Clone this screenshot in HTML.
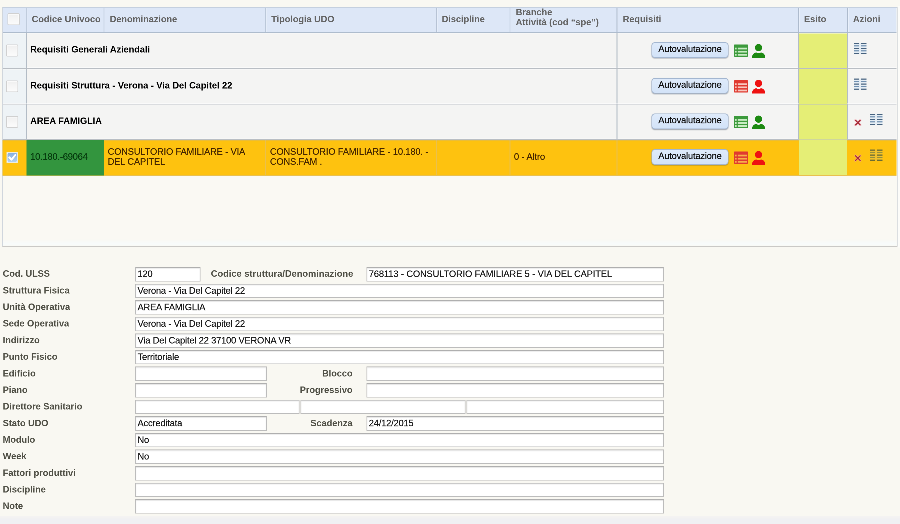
<!DOCTYPE html>
<html><head><meta charset="utf-8"><title>Requisiti UDO</title>
<style>
html,body{margin:0;padding:0;}
body{width:900px;height:524px;background:#f9f8f2;overflow:hidden;position:relative;}
#page{position:absolute;left:0;top:0;width:3600px;height:2096px;transform-origin:0 0;transform:scale(0.25);will-change:transform;font-family:"Liberation Sans",sans-serif;font-size:36.48px;color:#000;}
#page div,#page span{position:absolute;box-sizing:border-box;white-space:nowrap;}
#grid{background:#faf9f3;border:3.32px solid #d0d6dd;border-right-color:#bcc4ce;border-bottom-color:#9a9a9a;border-top-color:#c5d0df;}
.hd{background:#dde7f7;border-bottom:3.32px solid #aebccd;}
.hc{color:#646464;font-weight:bold;line-height:43.11px;}
.hs{width:6.63px;background:#aebbcd;border-right:3.32px solid #e9f0fb;}
.rw{background:#f4f4f3;border-top:3.32px solid #fbfbfb;border-bottom:3.32px solid #b9bec4;box-shadow:inset 0 -2.98px 0 #fafafa;}
.vs{background:#b3bcc6;}
.c0{background:#eef3f6;}
.cb{border:3.32px solid #d0d0d0;background:linear-gradient(#f0f0f0,#fcfcfc);border-radius:4.97px;box-shadow:inset 0 0 0 3.32px #fafafa;}
.tt{font-weight:bold;line-height:43.11px;}
.bt{border:3.32px solid #a3b6d0;border-radius:13.26px;background:linear-gradient(#dfebfb,#d3e3f8);box-shadow:0 2.65px 3.98px rgba(60,70,90,.45);text-align:center;line-height:48.41px;color:#111;letter-spacing:-0.4px;}
.es{background:#e5ee76;}
.sel{background:#fec20f;border-top:3.32px solid #e9bd3a;border-bottom:3.32px solid #e8c050;box-shadow:none;}
.nt,.st,.in,.bt{-webkit-text-stroke:0.6px currentColor;}
.st{color:#452600;line-height:39.79px;letter-spacing:-0.23px;}
.lb{color:#505046;font-weight:bold;line-height:43.11px;}
.lr{text-align:right;}
.in{background:#fff;border:3.32px solid #bcbcbc;border-top-color:#afafaf;box-shadow:inset 0 3.32px 3.32px #e4e4e4;line-height:49.74px;padding-left:6.3px;color:#1a1a1a;letter-spacing:-0.36px;}
#foot{background:linear-gradient(#f6f5f2,#f0f0f3 40%);}
svg{position:absolute;overflow:visible;}
</style></head><body>
<div id="page">
<div id="grid" style="left:9px;top:28px;width:3581px;height:958px;"></div>
<div style="left:3592px;top:24px;width:8px;height:966px;background:#fcfcf9"></div>
<div style="left:12px;top:958px;width:3574px;height:24px;background:linear-gradient(rgba(248,251,250,0),#f8fbfa 60%)"></div>
<div class="hd" style="left:12px;top:31px;width:3574px;height:100px;"></div>
<div class="hs" style="left:103px;top:31px;height:97px;opacity:0.6"></div>
<div class="hs" style="left:414px;top:31px;height:97px;opacity:0.35"></div>
<div class="hs" style="left:1060px;top:31px;height:97px;opacity:0.7"></div>
<div class="hs" style="left:1744px;top:31px;height:97px;opacity:0.8"></div>
<div class="hs" style="left:2038px;top:31px;height:97px;opacity:0.3"></div>
<div class="hs" style="left:2466px;top:31px;height:97px;opacity:1"></div>
<div class="hs" style="left:3192px;top:31px;height:97px;opacity:1"></div>
<div class="hs" style="left:3388px;top:31px;height:97px;opacity:1"></div>
<div class="cb" style="left:30px;top:53px;width:49px;height:48px;"></div>
<div class="hc" style="left:127px;top:55px;">Codice Univoco</div>
<div class="hc" style="left:439px;top:55px;">Denominazione</div>
<div class="hc" style="left:1085px;top:55px;">Tipologia UDO</div>
<div class="hc" style="left:1767px;top:55px;">Discipline</div>
<div class="hc" style="left:2491px;top:55px;">Requisiti</div>
<div class="hc" style="left:3216px;top:55px;">Esito</div>
<div class="hc" style="left:3412px;top:55px;">Azioni</div>
<div class="hc" style="left:2063px;top:29px;line-height:39.79px">Branche<br>Attività (cod “spe”)</div>
<div class="rw" style="left:12px;top:131px;width:3574px;height:144px;"></div>
<div class="c0" style="left:12px;top:134px;width:93px;height:138px;"></div>
<div class="vs" style="left:103px;top:131px;width:4px;height:141px;"></div>
<div class="vs" style="left:2466px;top:131px;width:4px;height:141px;"></div>
<div class="vs" style="left:3192px;top:131px;width:4px;height:141px;"></div>
<div class="vs" style="left:3388px;top:131px;width:4px;height:141px;"></div>
<div class="cb" style="left:24px;top:178px;width:49px;height:48px;"></div>
<div class="tt" style="left:121px;top:176px;">Requisiti Generali Aziendali</div>
<div class="bt" style="left:2606px;top:169px;width:308px;height:62px;">Autovalutazione</div>
<svg style="left:2936px;top:178px" width="56" height="49" viewBox="0 0 14 12.2"><rect x="0" y="0" width="14" height="12.2" rx="0.7" fill="#3c9a3c"/><rect x="0.9" y="3.1" width="1.7" height="1.8" fill="#c9ecc4"/><rect x="3.7" y="3.1" width="9.5" height="1.8" fill="#c9ecc4"/><rect x="0.9" y="6.2" width="1.7" height="1.8" fill="#c9ecc4"/><rect x="3.7" y="6.2" width="9.5" height="1.8" fill="#c9ecc4"/><rect x="0.9" y="9.3" width="1.7" height="1.8" fill="#c9ecc4"/><rect x="3.7" y="9.3" width="9.5" height="1.8" fill="#c9ecc4"/></svg>
<svg style="left:3008px;top:175px" width="53" height="56" viewBox="0 0 13.2 14"><circle cx="6.5" cy="3.9" r="3.6" fill="#1d8a12"/><path d="M0 14 C0 10.6 2 9 4.3 8.7 C5.6 9.8 7.5 9.8 8.8 8.7 C11.2 9 13.2 10.6 13.2 14 Z" fill="#1d8a12"/></svg>
<div class="es" style="left:3196px;top:134px;width:192px;height:139px;"></div>
<svg style="left:3415px;top:171px" width="51" height="45" viewBox="0 0 12.8 11.2"><rect x="0" y="0" width="12.8" height="11.2" fill="#dbe8f5" opacity=".6"/><rect x="0" y="0" width="5.4" height="1.1" fill="#46627f"/><rect x="7.4" y="0" width="5.4" height="1.1" fill="#46627f"/><rect x="0" y="2.55" width="5.4" height="1.1" fill="#7090b0"/><rect x="7.4" y="2.55" width="5.4" height="1.1" fill="#7090b0"/><rect x="0" y="5.0" width="5.4" height="1.1" fill="#46627f"/><rect x="7.4" y="5.0" width="5.4" height="1.1" fill="#46627f"/><rect x="0" y="7.55" width="5.4" height="1.1" fill="#7090b0"/><rect x="7.4" y="7.55" width="5.4" height="1.1" fill="#7090b0"/><rect x="0" y="10.1" width="5.4" height="1.1" fill="#46627f"/><rect x="7.4" y="10.1" width="5.4" height="1.1" fill="#46627f"/></svg>
<div class="rw" style="left:12px;top:275px;width:3574px;height:143px;"></div>
<div class="c0" style="left:12px;top:278px;width:93px;height:136px;"></div>
<div class="vs" style="left:103px;top:275px;width:4px;height:139px;"></div>
<div class="vs" style="left:2466px;top:275px;width:4px;height:139px;"></div>
<div class="vs" style="left:3192px;top:275px;width:4px;height:139px;"></div>
<div class="vs" style="left:3388px;top:275px;width:4px;height:139px;"></div>
<div class="cb" style="left:24px;top:322px;width:49px;height:47px;"></div>
<div class="tt" style="left:121px;top:320px;">Requisiti Struttura - Verona - Via Del Capitel 22</div>
<div class="bt" style="left:2606px;top:312px;width:308px;height:62px;">Autovalutazione</div>
<svg style="left:2936px;top:321px" width="56" height="49" viewBox="0 0 14 12.2"><rect x="0" y="0" width="14" height="12.2" rx="0.7" fill="#e03a30"/><rect x="0.9" y="3.1" width="1.7" height="1.8" fill="#f8c9c0"/><rect x="3.7" y="3.1" width="9.5" height="1.8" fill="#f8c9c0"/><rect x="0.9" y="6.2" width="1.7" height="1.8" fill="#f8c9c0"/><rect x="3.7" y="6.2" width="9.5" height="1.8" fill="#f8c9c0"/><rect x="0.9" y="9.3" width="1.7" height="1.8" fill="#f8c9c0"/><rect x="3.7" y="9.3" width="9.5" height="1.8" fill="#f8c9c0"/></svg>
<svg style="left:3008px;top:318px" width="53" height="56" viewBox="0 0 13.2 14"><circle cx="6.5" cy="3.9" r="3.6" fill="#ee1111"/><path d="M0 14 C0 10.6 2 9 4.3 8.7 C5.6 9.8 7.5 9.8 8.8 8.7 C11.2 9 13.2 10.6 13.2 14 Z" fill="#ee1111"/></svg>
<div class="es" style="left:3196px;top:275px;width:192px;height:141px;"></div>
<svg style="left:3415px;top:314px" width="51" height="45" viewBox="0 0 12.8 11.2"><rect x="0" y="0" width="12.8" height="11.2" fill="#dbe8f5" opacity=".6"/><rect x="0" y="0" width="5.4" height="1.1" fill="#46627f"/><rect x="7.4" y="0" width="5.4" height="1.1" fill="#46627f"/><rect x="0" y="2.55" width="5.4" height="1.1" fill="#7090b0"/><rect x="7.4" y="2.55" width="5.4" height="1.1" fill="#7090b0"/><rect x="0" y="5.0" width="5.4" height="1.1" fill="#46627f"/><rect x="7.4" y="5.0" width="5.4" height="1.1" fill="#46627f"/><rect x="0" y="7.55" width="5.4" height="1.1" fill="#7090b0"/><rect x="7.4" y="7.55" width="5.4" height="1.1" fill="#7090b0"/><rect x="0" y="10.1" width="5.4" height="1.1" fill="#46627f"/><rect x="7.4" y="10.1" width="5.4" height="1.1" fill="#46627f"/></svg>
<div class="rw" style="left:12px;top:418px;width:3574px;height:142px;"></div>
<div class="c0" style="left:12px;top:421px;width:93px;height:135px;"></div>
<div class="vs" style="left:103px;top:418px;width:4px;height:138px;"></div>
<div class="vs" style="left:2466px;top:418px;width:4px;height:138px;"></div>
<div class="vs" style="left:3192px;top:418px;width:4px;height:138px;"></div>
<div class="vs" style="left:3388px;top:418px;width:4px;height:138px;"></div>
<div class="cb" style="left:24px;top:464px;width:49px;height:47px;"></div>
<div class="tt" style="left:121px;top:462px;">AREA FAMIGLIA</div>
<div class="bt" style="left:2606px;top:454px;width:308px;height:63px;">Autovalutazione</div>
<svg style="left:2936px;top:463px" width="56" height="49" viewBox="0 0 14 12.2"><rect x="0" y="0" width="14" height="12.2" rx="0.7" fill="#3c9a3c"/><rect x="0.9" y="3.1" width="1.7" height="1.8" fill="#c9ecc4"/><rect x="3.7" y="3.1" width="9.5" height="1.8" fill="#c9ecc4"/><rect x="0.9" y="6.2" width="1.7" height="1.8" fill="#c9ecc4"/><rect x="3.7" y="6.2" width="9.5" height="1.8" fill="#c9ecc4"/><rect x="0.9" y="9.3" width="1.7" height="1.8" fill="#c9ecc4"/><rect x="3.7" y="9.3" width="9.5" height="1.8" fill="#c9ecc4"/></svg>
<svg style="left:3008px;top:461px" width="53" height="56" viewBox="0 0 13.2 14"><circle cx="6.5" cy="3.9" r="3.6" fill="#1d8a12"/><path d="M0 14 C0 10.6 2 9 4.3 8.7 C5.6 9.8 7.5 9.8 8.8 8.7 C11.2 9 13.2 10.6 13.2 14 Z" fill="#1d8a12"/></svg>
<div class="es" style="left:3196px;top:418px;width:192px;height:140px;"></div>
<svg style="left:3418px;top:477px" width="27" height="27" viewBox="0 0 7 7"><path d="M1 1 L6 6 M6 1 L1 6" stroke="#f0a0aa" stroke-opacity=".55" stroke-width="2.5" stroke-linecap="round"/><path d="M1.2 1.2 L5.8 5.8 M5.8 1.2 L1.2 5.8" stroke="#a82c3a" stroke-width="1.25" stroke-linecap="round"/></svg>
<svg style="left:3479px;top:455px" width="51" height="45" viewBox="0 0 12.8 11.2"><rect x="0" y="0" width="12.8" height="11.2" fill="#dbe8f5" opacity=".6"/><rect x="0" y="0" width="5.4" height="1.1" fill="#46627f"/><rect x="7.4" y="0" width="5.4" height="1.1" fill="#46627f"/><rect x="0" y="2.55" width="5.4" height="1.1" fill="#7090b0"/><rect x="7.4" y="2.55" width="5.4" height="1.1" fill="#7090b0"/><rect x="0" y="5.0" width="5.4" height="1.1" fill="#46627f"/><rect x="7.4" y="5.0" width="5.4" height="1.1" fill="#46627f"/><rect x="0" y="7.55" width="5.4" height="1.1" fill="#7090b0"/><rect x="7.4" y="7.55" width="5.4" height="1.1" fill="#7090b0"/><rect x="0" y="10.1" width="5.4" height="1.1" fill="#46627f"/><rect x="7.4" y="10.1" width="5.4" height="1.1" fill="#46627f"/></svg>
<div class="rw sel" style="left:10px;top:560px;width:3576px;height:143px;"></div>
<div style="left:106px;top:560px;width:309px;height:142px;background:#33953e"></div>
<div style="left:1060px;top:560px;width:4px;height:141px;background:rgba(205,190,170,.4)"></div>
<div style="left:1744px;top:560px;width:3px;height:141px;background:rgba(205,190,170,.4)"></div>
<div style="left:2038px;top:560px;width:4px;height:141px;background:rgba(205,190,170,.4)"></div>
<div style="left:2466px;top:560px;width:4px;height:141px;background:rgba(205,190,170,.4)"></div>
<div style="left:26px;top:607px;width:47px;height:46px;background:#eef3f6;border:3.32px solid #e9e6cf;border-radius:3.32px"></div>
<svg style="left:30px;top:611px" width="38" height="37" viewBox="0 0 9.4 9.2"><defs><linearGradient id="cg" x1="0" y1="0" x2="0" y2="1"><stop offset="0" stop-color="#86aee2"/><stop offset="1" stop-color="#b4d2f0"/></linearGradient></defs><rect width="9.4" height="9.2" rx="1.6" fill="url(#cg)"/><path d="M1.8 4.6 L3.9 6.8 L7.8 2.2" stroke="#fff" stroke-width="1.9" fill="none" stroke-linecap="round" stroke-linejoin="round"/></svg>
<div class="nt" style="left:121px;top:605px;line-height:43.11px;color:#063a0e;letter-spacing:-0.43px">10.180.-69064</div>
<div class="st" style="left:431px;top:587px">CONSULTORIO FAMILIARE - VIA<br>DEL CAPITEL</div>
<div class="st" style="left:1080px;top:587px">CONSULTORIO FAMILIARE - 10.180. -<br>CONS.FAM .</div>
<div class="st" style="left:2056px;top:605px;line-height:43.11px;letter-spacing:-0.17px">0 - Altro</div>
<div class="bt" style="left:2606px;top:597px;width:308px;height:62px;">Autovalutazione</div>
<svg style="left:2936px;top:606px" width="56" height="49" viewBox="0 0 14 12.2"><rect x="0" y="0" width="14" height="12.2" rx="0.7" fill="#e03a30"/><rect x="0.9" y="3.1" width="1.7" height="1.8" fill="#f7b04a"/><rect x="3.7" y="3.1" width="9.5" height="1.8" fill="#f7b04a"/><rect x="0.9" y="6.2" width="1.7" height="1.8" fill="#f7b04a"/><rect x="3.7" y="6.2" width="9.5" height="1.8" fill="#f7b04a"/><rect x="0.9" y="9.3" width="1.7" height="1.8" fill="#f7b04a"/><rect x="3.7" y="9.3" width="9.5" height="1.8" fill="#f7b04a"/></svg>
<svg style="left:3008px;top:603px" width="53" height="56" viewBox="0 0 13.2 14"><circle cx="6.5" cy="3.9" r="3.6" fill="#ee1111"/><path d="M0 14 C0 10.6 2 9 4.3 8.7 C5.6 9.8 7.5 9.8 8.8 8.7 C11.2 9 13.2 10.6 13.2 14 Z" fill="#ee1111"/></svg>
<div class="es" style="left:3196px;top:560px;width:192px;height:141px;"></div>
<svg style="left:3418px;top:619px" width="27" height="27" viewBox="0 0 7 7"><path d="M1 1 L6 6 M6 1 L1 6" stroke="#f0a0aa" stroke-opacity=".55" stroke-width="2.5" stroke-linecap="round"/><path d="M1.2 1.2 L5.8 5.8 M5.8 1.2 L1.2 5.8" stroke="#a82c3a" stroke-width="1.25" stroke-linecap="round"/></svg>
<svg style="left:3479px;top:598px" width="51" height="45" viewBox="0 0 12.8 11.2"><rect x="0" y="0" width="12.8" height="11.2" fill="#e6c040" opacity=".6"/><rect x="0" y="0" width="5.4" height="1.1" fill="#5f6434"/><rect x="7.4" y="0" width="5.4" height="1.1" fill="#5f6434"/><rect x="0" y="2.55" width="5.4" height="1.1" fill="#94903c"/><rect x="7.4" y="2.55" width="5.4" height="1.1" fill="#94903c"/><rect x="0" y="5.0" width="5.4" height="1.1" fill="#5f6434"/><rect x="7.4" y="5.0" width="5.4" height="1.1" fill="#5f6434"/><rect x="0" y="7.55" width="5.4" height="1.1" fill="#94903c"/><rect x="7.4" y="7.55" width="5.4" height="1.1" fill="#94903c"/><rect x="0" y="10.1" width="5.4" height="1.1" fill="#5f6434"/><rect x="7.4" y="10.1" width="5.4" height="1.1" fill="#5f6434"/></svg>
<div class="lb" style="left:11px;top:1073px;">Cod. ULSS</div>
<div class="in" style="left:541px;top:1068px;width:261px;height:58px;">120</div>
<div class="lb lr" style="left:773px;width:640px;top:1073px"><span style="position:static;letter-spacing:0.27px">Codice struttura/Denominazione</span></div>
<div class="in" style="left:1466px;top:1068px;width:1190px;height:58px;"><span style="position:static;letter-spacing:-0.1px">768113 - CONSULTORIO FAMILIARE 5 - VIA DEL CAPITEL</span></div>
<div class="lb" style="left:11px;top:1140px;">Struttura Fisica</div>
<div class="in" style="left:541px;top:1135px;width:2115px;height:57px;">Verona - Via Del Capitel 22</div>
<div class="lb" style="left:11px;top:1206px;">Unità Operativa</div>
<div class="in" style="left:541px;top:1201px;width:2115px;height:57px;">AREA FAMIGLIA</div>
<div class="lb" style="left:11px;top:1272px;">Sede Operativa</div>
<div class="in" style="left:541px;top:1267px;width:2115px;height:58px;">Verona - Via Del Capitel 22</div>
<div class="lb" style="left:11px;top:1339px;">Indirizzo</div>
<div class="in" style="left:541px;top:1334px;width:2115px;height:57px;">Via Del Capitel 22 37100 VERONA VR</div>
<div class="lb" style="left:11px;top:1405px;">Punto Fisico</div>
<div class="in" style="left:541px;top:1400px;width:2115px;height:57px;">Territoriale</div>
<div class="lb" style="left:11px;top:1472px;">Edificio</div>
<div class="in" style="left:541px;top:1466px;width:526px;height:58px;"></div>
<div class="lb lr" style="left:770px;width:640px;top:1472px">Blocco</div>
<div class="in" style="left:1466px;top:1466px;width:1190px;height:58px;"></div>
<div class="lb" style="left:11px;top:1538px;">Piano</div>
<div class="in" style="left:541px;top:1533px;width:526px;height:57px;"></div>
<div class="lb lr" style="left:770px;width:640px;top:1538px">Progressivo</div>
<div class="in" style="left:1466px;top:1533px;width:1190px;height:57px;"></div>
<div class="lb" style="left:11px;top:1604px;">Direttore Sanitario</div>
<div class="in" style="left:541px;top:1599px;width:657px;height:57px;"></div>
<div class="in" style="left:1202px;top:1599px;width:660px;height:57px;"></div>
<div class="in" style="left:1866px;top:1599px;width:790px;height:57px;"></div>
<div class="lb" style="left:11px;top:1671px;">Stato UDO</div>
<div class="in" style="left:541px;top:1665px;width:526px;height:58px;">Accreditata</div>
<div class="lb lr" style="left:770px;width:640px;top:1671px">Scadenza</div>
<div class="in" style="left:1466px;top:1665px;width:1190px;height:58px;">24/12/2015</div>
<div class="lb" style="left:11px;top:1737px;">Modulo</div>
<div class="in" style="left:541px;top:1732px;width:2115px;height:57px;">No</div>
<div class="lb" style="left:11px;top:1803px;">Week</div>
<div class="in" style="left:541px;top:1798px;width:2115px;height:57px;">No</div>
<div class="lb" style="left:11px;top:1870px;">Fattori produttivi</div>
<div class="in" style="left:541px;top:1865px;width:2115px;height:57px;"></div>
<div class="lb" style="left:11px;top:1936px;">Discipline</div>
<div class="in" style="left:541px;top:1931px;width:2115px;height:57px;"></div>
<div class="lb" style="left:11px;top:2002px;">Note</div>
<div class="in" style="left:541px;top:1997px;width:2115px;height:57px;"></div>
<div id="foot" style="left:0px;top:2063px;width:3600px;height:37px;"></div>
</div>
</body></html>
